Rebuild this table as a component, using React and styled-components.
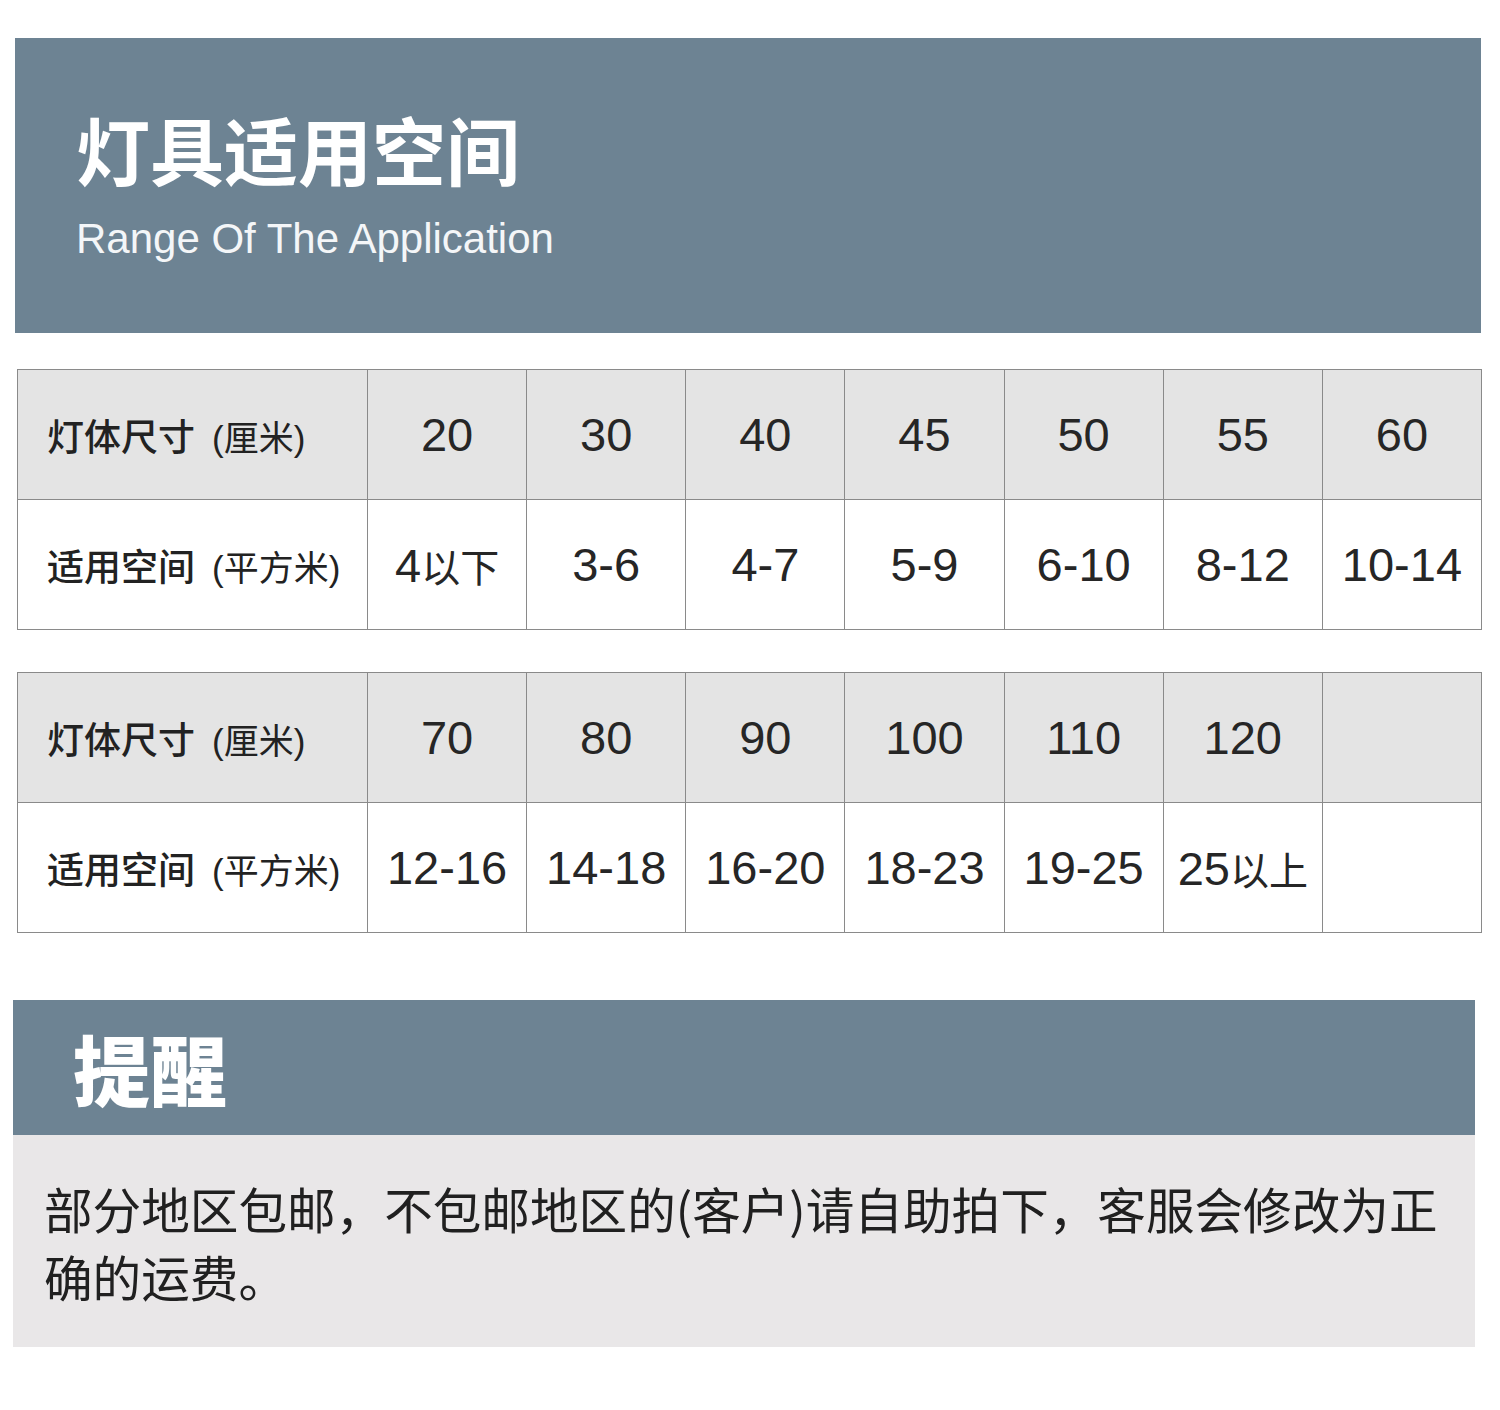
import styled, { createGlobalStyle } from "styled-components";

const GlobalStyle = createGlobalStyle`
  body {
    margin: 0;
    background: #ffffff;
    font-family: "Liberation Sans", "Noto Sans CJK SC", sans-serif;
    color: #222222;
  }
`;

const Page = styled.div`
  width: 1500px;
  padding-top: 38px;
  padding-bottom: 63px;
  display: flex;
  flex-direction: column;
`;

const Banner = styled.div`
  margin-left: 15px;
  width: 1466px;
  height: 295px;
  background: #6d8393;
  color: #ffffff;
  padding: 73px 0 0 61px;
  box-sizing: border-box;
  display: flex;
  flex-direction: column;
`;

const BannerTitle = styled.h1`
  margin: 0;
  font-family: "Noto Sans CJK SC", sans-serif;
  font-weight: 700;
  font-size: 74px;
  line-height: 1;
`;

const BannerSub = styled.div`
  margin-top: 33px;
  font-family: "Liberation Sans", sans-serif;
  font-size: 42px;
  line-height: 1;
  color: #f4f6f8;
`;

const SizeTable = styled.table`
  margin-left: 17px;
  margin-top: ${(p) => p.$top}px;
  width: 1465px;
  border-collapse: collapse;
  table-layout: fixed;
  border: 1px solid #999999;
`;

const Row = styled.tr`
  height: 130px;
  background: ${(p) => (p.$head ? "#e4e4e4" : "#ffffff")};
`;

const LabelCell = styled.td`
  width: 350px;
  box-sizing: border-box;
  border: 1px solid #8a8a8a;
  padding: 0 0 0 29px;
  font-family: "Noto Sans CJK SC", sans-serif;
  font-size: 37px;
  font-weight: 500;
  white-space: nowrap;
  vertical-align: middle;
`;

const Unit = styled.span`
  font-family: "Liberation Sans", "Noto Sans CJK SC", sans-serif;
  font-size: 35px;
  font-weight: 400;
  margin-left: 17px;
`;

const ValueCell = styled.td`
  border: 1px solid #8a8a8a;
  text-align: center;
  vertical-align: middle;
  font-size: 47px;
  white-space: nowrap;
  padding: 0;
  color: #262626;
`;

const Han = styled.span`
  font-size: 39px;
`;

const Notice = styled.div`
  margin-left: 13px;
  margin-top: 67px;
  width: 1462px;
  display: flex;
  flex-direction: column;
`;

const NoticeHead = styled.div`
  height: 135px;
  background: #6d8393;
  color: #ffffff;
  display: flex;
  align-items: center;
  padding-left: 60px;
  box-sizing: border-box;
`;

const NoticeTitle = styled.h2`
  margin: 0;
  font-family: "Noto Sans CJK SC", sans-serif;
  font-weight: 900;
  font-size: 77px;
  line-height: 1;
`;

const NoticeBody = styled.div`
  height: 212px;
  box-sizing: border-box;
  background: #e9e7e8;
  padding: 39px 10px 0 31px;
  font-family: "Noto Sans CJK SC", sans-serif;
  font-size: 48.6px;
  line-height: 68px;
  color: #202020;
`;

const tables = [
  {
    sizes: ["20", "30", "40", "45", "50", "55", "60"],
    areas: ["4以下", "3-6", "4-7", "5-9", "6-10", "8-12", "10-14"],
  },
  {
    sizes: ["70", "80", "90", "100", "110", "120", ""],
    areas: ["12-16", "14-18", "16-20", "18-23", "19-25", "25以上", ""],
  },
];

// digits stay large, the Chinese suffix (以下 / 以上) is set a little smaller
const Value = ({ text }) => {
  const m = text.match(/^([\d-]*)(.*)$/);
  return (
    <>
      {m[1]}
      {m[2] && <Han>{m[2]}</Han>}
    </>
  );
};

export default function App() {
  return (
    <>
      <GlobalStyle />
      <Page>
        <Banner>
          <BannerTitle>灯具适用空间</BannerTitle>
          <BannerSub>Range Of The Application</BannerSub>
        </Banner>

        {tables.map((t, i) => (
          <SizeTable key={i} $top={i === 0 ? 36 : 42}>
            <tbody>
              <Row $head>
                <LabelCell>
                  灯体尺寸<Unit>(厘米)</Unit>
                </LabelCell>
                {t.sizes.map((s, j) => (
                  <ValueCell key={j}>{s}</ValueCell>
                ))}
              </Row>
              <Row>
                <LabelCell>
                  适用空间<Unit>(平方米)</Unit>
                </LabelCell>
                {t.areas.map((a, j) => (
                  <ValueCell key={j}>
                    <Value text={a} />
                  </ValueCell>
                ))}
              </Row>
            </tbody>
          </SizeTable>
        ))}

        <Notice>
          <NoticeHead>
            <NoticeTitle>提醒</NoticeTitle>
          </NoticeHead>
          <NoticeBody>
            部分地区包邮，不包邮地区的(客户)请自助拍下，客服会修改为正确的运费。
          </NoticeBody>
        </Notice>
      </Page>
    </>
  );
}
